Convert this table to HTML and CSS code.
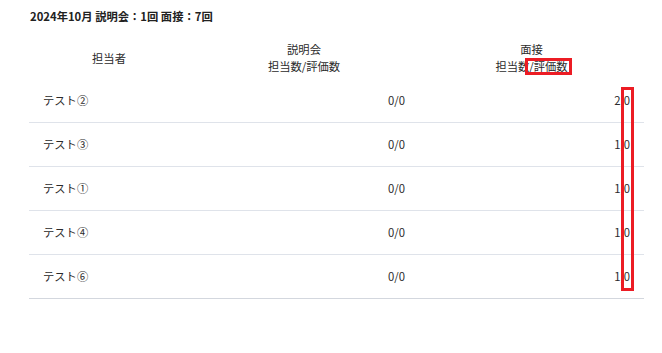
FILE: index.html
```html
<!DOCTYPE html>
<html lang="ja">
<head>
<meta charset="utf-8">
<link rel="stylesheet" href="styles.css">
</head>
<body>
<div class="page">
  <h1 class="title">2024年10月 説明会：1回 面接：7回</h1>
  <table class="stats">
    <colgroup>
      <col class="c-name">
      <col class="c-brief">
      <col class="c-interview">
    </colgroup>
    <thead>
      <tr>
        <th>担当者</th>
        <th>説明会<br>担当数/評価数</th>
        <th>面接<br>担当数/評価数</th>
      </tr>
    </thead>
    <tbody>
      <tr><td>テスト②</td><td class="num">0/0</td><td class="num">2,0</td></tr>
      <tr><td>テスト③</td><td class="num">0/0</td><td class="num">1,0</td></tr>
      <tr><td>テスト①</td><td class="num">0/0</td><td class="num">1,0</td></tr>
      <tr><td>テスト④</td><td class="num">0/0</td><td class="num">1,0</td></tr>
      <tr><td>テスト⑥</td><td class="num">0/0</td><td class="num">1,0</td></tr>
    </tbody>
  </table>
  <div class="mark mark-head"></div>
  <div class="mark mark-col"></div>
</div>
</body>
</html>
```
FILE: styles.css
```css
html, body {
  margin: 0;
  padding: 0;
  background: #ffffff;
}
body {
  font-family: "Noto Sans CJK JP", "Noto Sans", sans-serif;
  color: #2b2b2b;
  font-size: 11.3px;
}
.page {
  position: relative;
  padding: 8px 18px 0 29px;
}
.title {
  margin: 0 0 12px 1px;
  font-size: 11.3px;
  line-height: 17px;
  font-weight: 700;
  color: #222;
}
.stats {
  width: 615px;
  border-collapse: collapse;
  table-layout: fixed;
}
.c-name { width: 160px; }
.c-brief { width: 230px; }
.c-interview { width: 225px; }
.stats th {
  height: 42px;
  padding: 0;
  font-weight: 400;
  line-height: 17px;
  text-align: center;
  vertical-align: middle;
}
.stats td {
  height: 43px;
  padding: 0 14px;
  line-height: 17px;
  vertical-align: middle;
  border-bottom: 1px solid #dfe3ea;
}
.stats tbody tr:last-child td {
  border-bottom-color: #d3d7de;
}
.stats td.num {
  text-align: right;
}
.mark {
  position: absolute;
  border: 3px solid #ec1c24;
  box-sizing: border-box;
}
.mark-head {
  left: 525px;
  top: 58px;
  width: 47px;
  height: 17px;
}
.mark-col {
  left: 621px;
  top: 87px;
  width: 13px;
  height: 204px;
}
```
